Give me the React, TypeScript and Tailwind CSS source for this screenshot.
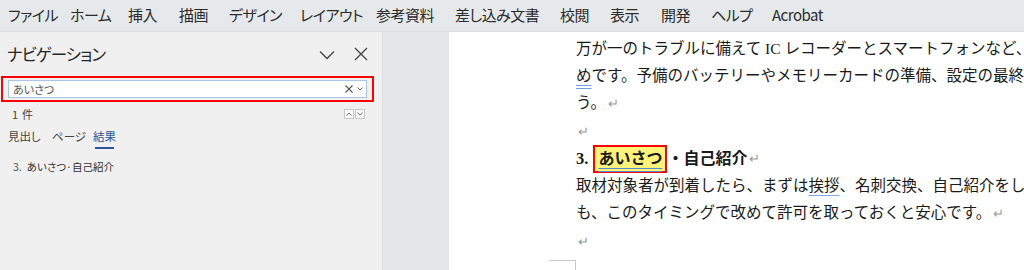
import React from "react";

const menu = [
  ["ファイル", 8],
  ["ホーム", 70],
  ["挿入", 128],
  ["描画", 179],
  ["デザイン", 229],
  ["レイアウト", 300],
  ["参考資料", 376],
  ["差し込み文書", 455],
  ["校閲", 560],
  ["表示", 610],
  ["開発", 661],
  ["ヘルプ", 711],
  ["Acrobat", 772],
] as const;

const Ret = () => <span className="text-[#9a9a9a] text-[13px] font-normal ml-[2px]">↵</span>;

export default function App() {
  return (
    <div
      className="w-[1024px] h-[270px] overflow-hidden flex flex-col bg-[#e4e7e9]"
      style={{ fontFamily: '"Noto Sans CJK JP", "Noto Sans", sans-serif' }}
    >
      {/* menu bar */}
      <div className="h-[32px] shrink-0 bg-[#e6e9eb] flex items-center text-[15px] text-[#2b2b2b] border-b border-[#dcdfe1] [font-feature-settings:'palt']">
        <div className="flex items-center pl-[8px]">
          {menu.map(([t], i) => {
            const next = i < menu.length - 1 ? menu[i + 1][1] : 0;
            const w = next ? next - menu[i][1] : 60;
            return (
              <span key={t} style={{ width: w }} className="inline-block shrink-0 whitespace-nowrap tracking-[-0.5px]">
                {t}
              </span>
            );
          })}
        </div>
      </div>

      <div className="flex flex-1 min-h-0">
        {/* nav pane */}
        <div className="w-[383px] shrink-0 bg-[#f0f0f0] border-r border-[#dadcde] flex flex-col [font-feature-settings:'palt']">
          <div className="h-[44px] flex items-center justify-between pl-[7px] pr-[14px]">
            <span className="text-[16.5px] text-[#262626] tracking-[-1px]">ナビゲーション</span>
            <div className="flex items-center gap-[19px]">
              <svg width="16" height="10" viewBox="0 0 16 10" className="mt-[1px]">
                <path d="M1 1.5 L8 8.5 L15 1.5" fill="none" stroke="#444" strokeWidth="1.3" />
              </svg>
              <svg width="14" height="14" viewBox="0 0 14 14">
                <path d="M1 1 L13 13 M13 1 L1 13" fill="none" stroke="#444" strokeWidth="1.3" />
              </svg>
            </div>
          </div>
          <div className="ml-[1px] w-[373px] h-[26px] border-[2px] border-[#ff0000] flex items-center px-[5px]">
            <div className="flex-1 h-[18px] bg-white border border-[#aac4e6] flex items-center justify-between pl-[4px] pr-[3px]">
              <span className="text-[11px] text-[#555] leading-none">あいさつ</span>
              <div className="flex items-center gap-[4px]">
                <svg width="8" height="8" viewBox="0 0 8 8">
                  <path d="M0.5 0.5 L7.5 7.5 M7.5 0.5 L0.5 7.5" stroke="#555" strokeWidth="1.1" />
                </svg>
                <svg width="6" height="4" viewBox="0 0 6 4">
                  <path d="M0.5 0.5 L3 3 L5.5 0.5" fill="none" stroke="#666" strokeWidth="1" />
                </svg>
              </div>
            </div>
          </div>
          <div className="flex items-center justify-between pl-[12px] pr-[17px] mt-[4px] h-[16px]">
            <span className="text-[11px] text-[#444]">
              1<span className="ml-[4px]">件</span>
            </span>
            <div className="flex gap-[1px]">
              <div className="w-[10px] h-[10px] border border-[#c8c8c8] bg-[#f7f7f7] flex items-center justify-center">
                <svg width="6" height="4" viewBox="0 0 6 4"><path d="M0.5 3.5 L3 1 L5.5 3.5" fill="none" stroke="#666" strokeWidth="0.9" /></svg>
              </div>
              <div className="w-[10px] h-[10px] border border-[#c8c8c8] bg-[#f7f7f7] flex items-center justify-center">
                <svg width="6" height="4" viewBox="0 0 6 4"><path d="M0.5 0.5 L3 3 L5.5 0.5" fill="none" stroke="#666" strokeWidth="0.9" /></svg>
              </div>
            </div>
          </div>
          <div className="flex items-start pl-[8px] mt-[6px] text-[11.5px] text-[#444] h-[22px]">
            <span className="w-[44px]">見出し</span>
            <span className="w-[41px]">ページ</span>
            <span className="flex flex-col items-center text-[#2b579a]">
              <span>結果</span>
              <span className="w-[19px] h-[2px] bg-[#2b579a] mt-[2px]"></span>
            </span>
          </div>
          <div className="pl-[13px] mt-[9px] text-[10.5px] text-[#333]">
            <span className="text-[#555]">3.</span>
            <span className="ml-[5px]">あいさつ·自己紹介</span>
          </div>
        </div>

        {/* gap */}
        <div className="w-[66px] shrink-0 bg-[#e4e7e9]"></div>

        {/* page */}
        <div
          className="flex-1 bg-white relative overflow-hidden"
          style={{ fontFamily: '"Liberation Serif", "Noto Sans CJK JP", serif' }}
        >
          <div className="pl-[127px] pt-[3px] text-[15.5px] leading-[27px] text-[#1a1a1a] whitespace-nowrap">
            <div>万が一のトラブルに備えて IC レコーダーとスマートフォンなど、</div>
            <div>
              <span className="underline decoration-double decoration-[#6f9ee8] underline-offset-[4px]">め</span>
              です。予備のバッテリーやメモリーカードの準備、設定の最終確
            </div>
            <div>
              う。
              <Ret />
            </div>
            <div>
              <Ret />
            </div>
            <div className="font-bold flex items-center h-[27px]">
              <span className="text-[16.5px]">3.</span>
              <span className="ml-[5px] border-[2px] border-[#ff0000] px-[3px] h-[28px] flex items-center bg-[#fff27a] text-[16px]">
                <span className="underline decoration-double decoration-[#4f8ed0] underline-offset-[4px]">あいさつ</span>
              </span>
              <span className="text-[16px]">・自己紹介</span>
              <Ret />
            </div>
            <div>
              取材対象者が到着したら、まずは
              <span className="underline decoration-[#7fa7e6] underline-offset-[4px]">挨拶</span>
              、名刺交換、自己紹介をし
            </div>
            <div>
              も、このタイミングで改めて許可を取っておくと安心です。
              <Ret />
            </div>
            <div>
              <Ret />
            </div>
          </div>
          <div className="absolute left-[100px] top-[228px] w-[27px] h-[20px] border-t border-r border-[#c9c9c9]"></div>
        </div>
      </div>
    </div>
  );
}
